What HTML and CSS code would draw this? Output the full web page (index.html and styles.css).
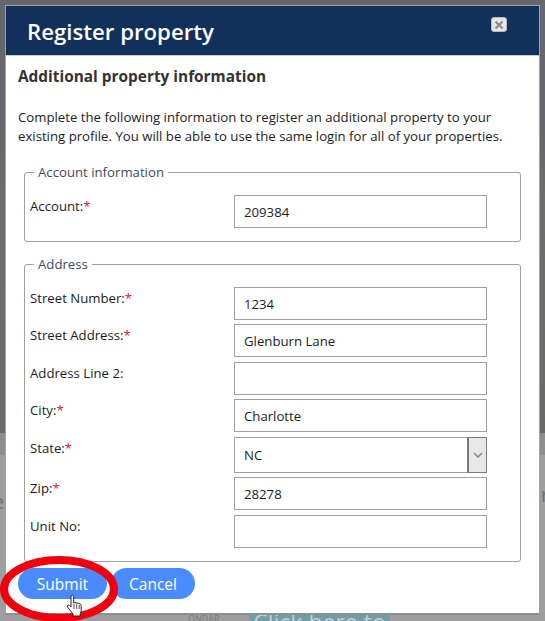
FILE: index.html
```html
<!DOCTYPE html>
<html lang="en">
<head>
    <meta charset="UTF-8">
    <meta name="viewport" content="width=device-width, initial-scale=1.0">
    <title>Register property</title>
    <link rel="stylesheet" href="styles.css">
</head>
<body>

    <!-- What shows of the page behind the modal -->
    <div class="backdrop-banner">Click here to</div>
    <div class="backdrop-small">ONDAR</div>
    <div class="backdrop-left">e</div>
    <div class="backdrop-right">r</div>

    <section class="modal">
        <!-- Title bar -->
        <header class="modal-header">
            <h1 class="modal-title">Register property</h1>
            <button class="close" type="button" aria-label="Close">
                <svg width="10" height="10" viewBox="0 0 10 10"><path d="M1.5 1.5l7 7M8.5 1.5l-7 7" stroke="#8a8a8a" stroke-width="2" fill="none"/></svg>
            </button>
        </header>

        <div class="modal-body">
            <h2 class="section-title">Additional property information</h2>
            <p class="intro">Complete the following information to register an additional property to your existing profile. You will be able to use the same login for all of your properties.</p>

            <fieldset class="group group-account">
                <legend>Account information</legend>
                <div class="row">
                    <label>Account:<span class="req">*</span></label>
                    <input class="field" type="text" value="209384">
                </div>
            </fieldset>

            <fieldset class="group group-address">
                <legend>Address</legend>
                <div class="row">
                    <label>Street Number:<span class="req">*</span></label>
                    <input class="field" type="text" value="1234">
                </div>
                <div class="row">
                    <label>Street Address:<span class="req">*</span></label>
                    <input class="field" type="text" value="Glenburn Lane">
                </div>
                <div class="row">
                    <label>Address Line 2:</label>
                    <input class="field" type="text" value="">
                </div>
                <div class="row">
                    <label>City:<span class="req">*</span></label>
                    <input class="field" type="text" value="Charlotte">
                </div>
                <div class="row row-state">
                    <label>State:<span class="req">*</span></label>
                    <div class="field select">
                        <span class="select-value">NC</span>
                        <span class="select-arrow">
                            <svg width="10" height="6" viewBox="0 0 10 6"><path d="M1 1l4 4 4-4" stroke="#8a8a8a" stroke-width="1.6" fill="none"/></svg>
                        </span>
                    </div>
                </div>
                <div class="row">
                    <label>Zip:<span class="req">*</span></label>
                    <input class="field" type="text" value="28278">
                </div>
                <div class="row">
                    <label>Unit No:</label>
                    <input class="field" type="text" value="">
                </div>
            </fieldset>

            <div class="actions">
                <button class="btn btn-submit" type="button">Submit</button>
                <button class="btn btn-cancel" type="button">Cancel</button>
            </div>
        </div>
    </section>

    <!-- Red annotation ring and pointer drawn over the page -->
    <svg class="ring" width="120" height="72" viewBox="0 0 120 72">
        <ellipse cx="59" cy="38" rx="55" ry="29" fill="none" stroke="#f0000f" stroke-width="8"/>
    </svg>
    <svg class="pointer" width="18" height="24" viewBox="0 0 18 24">
        <path d="M5 2c1-1.300 2.500-1 2.700.5V9l1.500-.4 1.600.4 1.500.2 1.600.6c1 .5 1.300 1.300 1.300 2.400v4c0 1.500-.5 2.500-1 3.500v2.300H7v-2l-2-2.500-3.500-4.500c-.7-1.200.6-2.500 1.800-1.700L5 13z" fill="#fff" stroke="#222" stroke-width="1"/>
        <path d="M8 10v5M10.700 10v5M13.200 11v4" stroke="#222" stroke-width=".8" fill="none"/>
    </svg>

</body>
</html>
```

FILE: styles.css
```css
* {
    margin: 0;
    padding: 0;
    box-sizing: border-box;
}

body {
    width: 545px;
    height: 621px;
    position: relative;
    overflow: hidden;
    padding: 5px 5px 0 5px;
    font-family: "Open Sans", sans-serif;
    font-size: 13.2px;
    color: #1c1c1c;
    background: linear-gradient(#66676c 0, #66676c 130px, #6e6e6a 200px, #6a6a66 433px, #8e8e8e 433px, #8e8e8e 455px, #9e9e9e 455px);
}

.modal {
    position: relative;
    z-index: 1;
    width: 535px;
    height: 610px;
    background-color: #fff;
    border: 1px solid #a3a3a3;
    border-bottom: 2px solid #8f8f8f;
}

.modal-header {
    display: flex;
    justify-content: space-between;
    align-items: flex-start;
    height: 50px;
    padding: 10px 32px 0 21px;
    background-color: #12305c;
    border-bottom: 1px solid #c9cbd6;
}

.modal-title {
    font-size: 22.2px;
    line-height: 31px;
    font-weight: 600;
    color: #fff;
}

.close {
    display: flex;
    align-items: center;
    justify-content: center;
    width: 16px;
    height: 15px;
    margin-top: 1px;
    background-color: #e6e6e6;
    border: 1px solid #bbb;
    border-radius: 3px;
}

.modal-body {
    padding: 10px 12px 0 12px;
}

.section-title {
    font-size: 15.4px;
    line-height: 22px;
    font-weight: 700;
    color: #333;
}

.intro {
    margin-top: 20px;
    line-height: 19px;
}

.group {
    margin: 0 6px;
    padding: 9px 5px 0 5px;
    border: 1px solid #a0a0a0;
    border-radius: 3px;
}

.group legend {
    margin-left: 4px;
    padding: 0 4px;
    line-height: 18px;
    color: #3c4a5c;
}

.group-account {
    height: 79px;
    margin-top: 17px;
}

.group-address {
    height: 307px;
    margin-top: 13px;
}

.row {
    display: flex;
    align-items: flex-start;
    height: 37.4px;
    padding-top: 5px;
}

.row-state {
    height: 40.6px;
}

.row label {
    width: 204px;
    padding-top: 2px;
    line-height: 18px;
}

.req {
    color: #d8163c;
}

.field {
    width: 253px;
    height: 33px;
    padding: 0 9px;
    font-family: inherit;
    font-size: 13.2px;
    color: #1c1c1c;
    background-color: #fff;
    border: 1px solid #a0a0a0;
}

.select {
    display: flex;
    align-items: center;
    justify-content: space-between;
    height: 36px;
    padding-right: 0;
}

.select-arrow {
    display: flex;
    align-items: center;
    justify-content: center;
    width: 18px;
    height: 34px;
    background-color: #e8e8e8;
    border-left: 1px solid #7a7a7a;
    outline: 1px solid #7a7a7a;
}

.actions {
    display: flex;
    gap: 4px;
    margin-top: 6px;
}

.btn {
    height: 31px;
    font-family: inherit;
    font-size: 15.5px;
    color: #fff;
    background-color: #4a8cff;
    border: none;
    border-radius: 16px;
}

.btn-submit {
    width: 89px;
}

.btn-cancel {
    width: 84px;
}

.ring {
    position: absolute;
    left: 0;
    top: 551px;
    z-index: 2;
}

.pointer {
    position: absolute;
    left: 66px;
    top: 594px;
    z-index: 3;
}

.backdrop-banner {
    position: absolute;
    left: 249px;
    top: 600px;
    width: 141px;
    height: 21px;
    overflow: hidden;
    font-size: 23px;
    line-height: 44px;
    text-align: center;
    white-space: nowrap;
    color: #c4cdd0;
    background-color: #6f9ea8;
}

.backdrop-small {
    position: absolute;
    left: 188px;
    top: 613px;
    font-size: 9px;
    line-height: 12px;
    color: #7a7a7a;
}

.backdrop-left {
    position: absolute;
    left: -7px;
    top: 488px;
    font-size: 20px;
    line-height: 27px;
    color: #6f6f6f;
}

.backdrop-right {
    position: absolute;
    left: 541px;
    top: 481px;
    font-size: 20px;
    line-height: 27px;
    color: #6f6f6f;
}
```
